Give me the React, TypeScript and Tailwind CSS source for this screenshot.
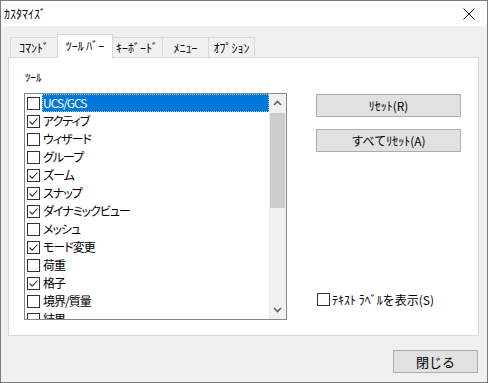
import React from "react";

const items: [string, boolean][] = [
  ["UCS/GCS", false],
  ["アクティブ", true],
  ["ウィザード", false],
  ["グループ", false],
  ["ズーム", true],
  ["スナップ", true],
  ["ダイナミックビュー", true],
  ["メッシュ", false],
  ["モード変更", true],
  ["荷重", false],
  ["格子", true],
  ["境界/質量", false],
  ["結果", false],
];

function Box({ checked }: { checked: boolean }) {
  return (
    <div className="w-[13px] h-[13px] shrink-0 border border-[#333333] bg-white flex items-center justify-center">
      {checked && (
        <svg width="11" height="11" viewBox="0 0 11 11">
          <path d="M1.5 5.5 L4.2 8.2 L9.5 2.5" fill="none" stroke="#333" strokeWidth="1.1" />
        </svg>
      )}
    </div>
  );
}

const tabs = ["ｺﾏﾝﾄﾞ", "ﾂｰﾙ ﾊﾞｰ", "ｷｰﾎﾞｰﾄﾞ", "ﾒﾆｭｰ", "ｵﾌﾟｼｮﾝ"];
const tabW = [48, 54, 52, 47, 47];

export default function App() {
  return (
    <div
      className="w-[488px] h-[383px] border border-[#7a7a7a] bg-[#f0f0f0] flex flex-col text-[12px] text-black overflow-hidden"
      style={{ fontFamily: '"Noto Sans CJK JP", "Noto Sans", sans-serif' }}
    >
      <div className="h-[25px] bg-white flex items-center justify-between pl-[3px] pr-[12px] shrink-0">
        <span className="text-[12px] leading-none">ｶｽﾀﾏｲｽﾞ</span>
        <svg width="12" height="12" viewBox="0 0 12 12">
          <path d="M0.5 0.5 L11.5 11.5 M11.5 0.5 L0.5 11.5" stroke="#111" strokeWidth="1" />
        </svg>
      </div>
      <div className="flex-1 flex flex-col pl-[7px]">
        <div className="flex items-end h-[31px] pl-[2px]">
          {tabs.map((t, i) =>
            i === 1 ? (
              <div
                key={t}
                className="h-[24px] -mb-px relative z-10 bg-white border border-b-0 border-[#d9d9d9] flex items-center justify-center text-[12px] pb-[2px] -mx-[1px]"
                style={{ width: tabW[i] + 2 }}
              >
                {t}
              </div>
            ) : (
              <div
                key={t}
                className="h-[20px] bg-[#f0f0f0] border border-b-0 border-[#d9d9d9] -ml-px first:ml-0 flex items-center justify-center text-[12px]"
                style={{ width: tabW[i] }}
              >
                {t}
              </div>
            )
          )}
        </div>
        <div className="w-[471px] h-[279px] bg-white border border-[#d9d9d9] flex">
          <div className="pl-[15px] pt-[12px] flex flex-col">
            <div className="h-[15px] leading-[15px] text-[11px] pl-[1px]">ﾂｰﾙ</div>
            <div className="mt-[8px] w-[263px] h-[227px] border border-[#828790] flex">
              <div className="flex-1 flex flex-col overflow-hidden">
                {items.map(([name, c], i) => (
                  <div key={name} className="h-[18px] shrink-0 flex items-center pl-[2px]">
                    <Box checked={c} />
                    <div
                      className={
                        i === 0
                          ? "ml-[2px] flex-1 h-[18px] flex items-center bg-[#0078d7] text-white border border-dotted border-[#9fc5ee]"
                          : "ml-[3px] flex-1 h-[18px] flex items-center"
                      }
                    >
                      <span
                        className="text-[12px] leading-none tracking-[-1px]"
                        style={{ fontFeatureSettings: '"palt"' }}
                      >
                        {name}
                      </span>
                    </div>
                  </div>
                ))}
              </div>
              <div className="w-[17px] bg-[#f0f0f0] flex flex-col">
                <div className="h-[18px] flex items-center justify-center">
                  <svg width="9" height="6" viewBox="0 0 9 6">
                    <path d="M1 5 L4.5 1.5 L8 5" fill="none" stroke="#606060" strokeWidth="1.6" />
                  </svg>
                </div>
                <div className="mt-[1px] h-[95px] mx-[1px] bg-[#cdcdcd]" />
                <div className="flex-1" />
                <div className="h-[18px] flex items-center justify-center">
                  <svg width="9" height="6" viewBox="0 0 9 6">
                    <path d="M1 1 L4.5 4.5 L8 1" fill="none" stroke="#606060" strokeWidth="1.6" />
                  </svg>
                </div>
              </div>
            </div>
          </div>
          <div className="ml-[29px] pt-[36px] flex flex-col">
            <div className="w-[145px] h-[23px] bg-[#e1e1e1] border border-[#adadad] flex items-center justify-center text-[12px]">
              ﾘｾｯﾄ(R)
            </div>
            <div className="mt-[12px] w-[145px] h-[23px] bg-[#e1e1e1] border border-[#adadad] flex items-center justify-center text-[12px]">
              すべてﾘｾｯﾄ(A)
            </div>
            <div className="mt-[141px] flex items-center pl-[1px]">
              <Box checked={false} />
              <span className="ml-[2px] text-[12px] leading-none">ﾃｷｽﾄ ﾗﾍﾞﾙを表示(S)</span>
            </div>
          </div>
        </div>
        <div className="flex justify-end pr-[9px] mt-[14px]">
          <div className="w-[85px] h-[23px] bg-[#e1e1e1] border border-[#adadad] flex items-center justify-center text-[13px]">
            閉じる
          </div>
        </div>
      </div>
    </div>
  );
}
